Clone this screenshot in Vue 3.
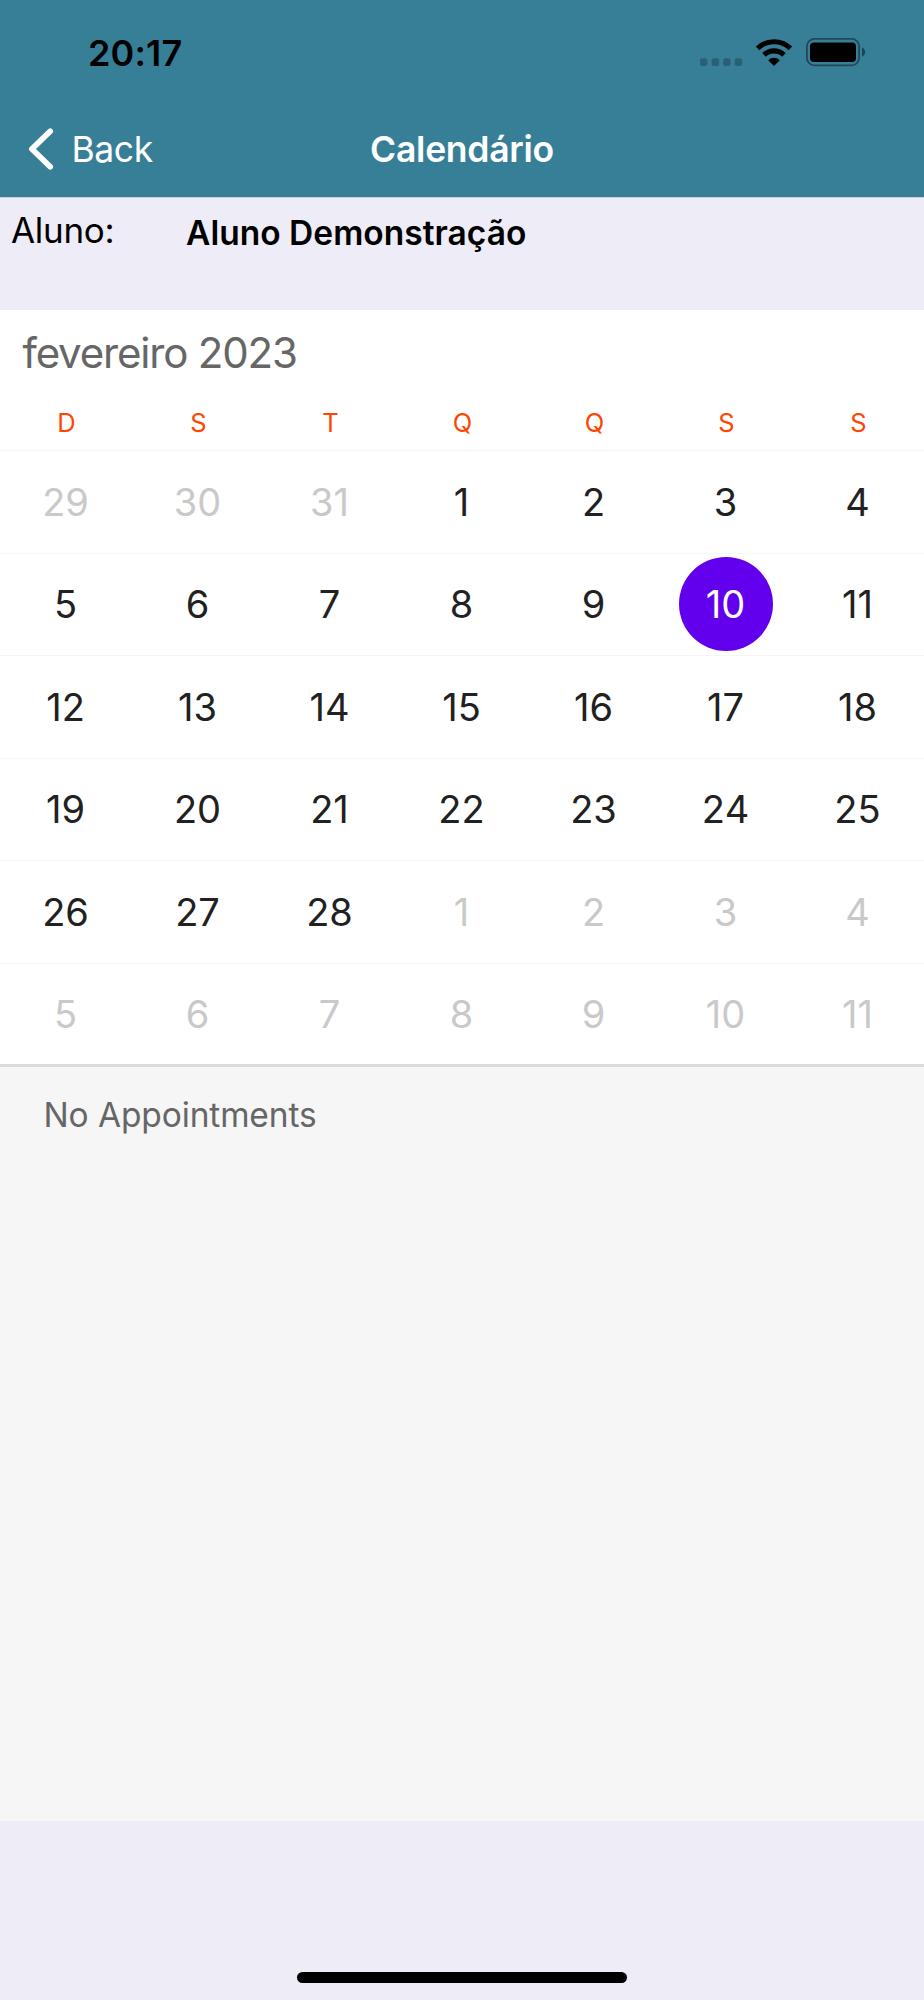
<script setup>
const weekdays = ['D', 'S', 'T', 'Q', 'Q', 'S', 'S']

// 42 days starting on 29 January 2023
const days = Array.from({ length: 42 }, (_, i) => {
  const date = new Date(2023, 0, 29 + i)
  const inMonth = date.getMonth() === 1
  return {
    key: i,
    label: date.getDate(),
    outside: !inMonth,
    selected: inMonth && date.getDate() === 10,
  }
})
const weeks = Array.from({ length: 6 }, (_, w) => days.slice(w * 7, w * 7 + 7))
</script>

<template>
  <div class="screen">
    <header class="header">
      <div class="status">
        <span class="time">20:17</span>
        <svg class="status-icons" width="168" height="32" viewBox="698 36 168 32">
          <g fill="#000" fill-opacity="0.24">
            <rect x="700" y="58.3" width="7.5" height="7.7" rx="2.2" />
            <rect x="711.6" y="58.3" width="7.5" height="7.7" rx="2.2" />
            <rect x="723.1" y="58.3" width="7.5" height="7.7" rx="2.2" />
            <rect x="734.6" y="58.3" width="7.5" height="7.7" rx="2.2" />
          </g>
          <g fill="none" stroke="#000" stroke-width="5.2">
            <path d="M757.6 48.4A23.6 23.6 0 0 1 790.4 48.4" />
            <path d="M764 54.8A14.6 14.6 0 0 1 784 54.8" />
          </g>
          <path d="M774 66L768.2 60.2A8.3 8.3 0 0 1 779.8 60.2Z" fill="#000" />
          <rect x="806.9" y="38.9" width="52.2" height="26.4" rx="7.4" fill="none" stroke="#000" stroke-opacity="0.42" stroke-width="1.8" />
          <rect x="810" y="42.4" width="46" height="19.6" rx="4" fill="#000" />
          <path d="M862 47.6C864 48.4 865.1 50.2 865.1 52.2C865.1 54.2 864 56 862 56.8Z" fill="#000" fill-opacity="0.45" />
        </svg>
      </div>
      <nav class="nav">
        <button class="back" type="button">
          <svg width="26" height="44" viewBox="28 127 26 44">
            <path d="M50.2 131.2L31.9 149L50.2 166.8" fill="none" stroke="#fff" stroke-width="5.7" stroke-linecap="round" stroke-linejoin="round" />
          </svg>
          <span>Back</span>
        </button>
        <h1 class="title">Calendário</h1>
      </nav>
    </header>

    <section class="student">
      <span class="student-label">Aluno:</span>
      <span class="student-name">Aluno Demonstração</span>
    </section>

    <main class="calendar">
      <h2 class="month">fevereiro 2023</h2>
      <div class="weekdays">
        <span v-for="(d, i) in weekdays" :key="i">{{ d }}</span>
      </div>
      <div v-for="(week, w) in weeks" :key="w" class="week">
        <span v-for="day in week" :key="day.key" class="day" :class="{ outside: day.outside, selected: day.selected }">{{ day.label }}</span>
      </div>
    </main>

    <section class="agenda">
      <p>No Appointments</p>
    </section>

    <footer class="footer">
      <div class="home-indicator"></div>
    </footer>
  </div>
</template>

<style>
body {
  margin: 0;
}
</style>

<style scoped>
.screen {
  width: 924px;
  height: 2000px;
  display: flex;
  flex-direction: column;
  background: #eeecf7;
  font-family: Inter, "Liberation Sans", sans-serif;
  color: #000;
  overflow: hidden;
  white-space: nowrap;
}
.header {
  height: 197px;
  background: #377f97;
  border-bottom: 1px solid #d2cedd;
}
.status {
  height: 105px;
  padding: 0 58px 0 88px;
  display: flex;
  align-items: center;
  justify-content: space-between;
}
.time {
  font-size: 36px;
  font-weight: 600;
  letter-spacing: 0.15px;
}
.status-icons {
  position: relative;
  top: -0.5px;
}
.nav {
  height: 88px;
  display: grid;
  grid-template-columns: 1fr auto 1fr;
  align-items: center;
  color: #fff;
}
.back {
  padding: 0 0 0 28px;
  border: 0;
  background: none;
  color: inherit;
  font: 400 35.5px Inter, "Liberation Sans", sans-serif;
  letter-spacing: -0.4px;
  display: flex;
  align-items: center;
  gap: 17.5px;
}
.title {
  margin: 0;
  font-size: 35.5px;
  font-weight: 600;
  letter-spacing: -0.26px;
}
.student {
  height: 111.5px;
  display: flex;
  align-items: flex-start;
}
.student-label {
  width: 175px;
  padding-left: 11px;
  font-size: 35px;
  line-height: 64px;
  letter-spacing: -0.3px;
}
.student-name {
  font-size: 33.5px;
  line-height: 70px;
  font-weight: 600;
  letter-spacing: 0.02px;
}
.calendar {
  background: #fff;
  border-bottom: 3px solid #dadcdb;
}
.month {
  height: 86.5px;
  margin: 0;
  padding-left: 22.5px;
  font-size: 42px;
  line-height: 86px;
  font-weight: 400;
  letter-spacing: -1.18px;
  color: #666;
}
.weekdays {
  height: 54px;
  display: grid;
  grid-template-columns: repeat(7, 1fr);
  font-size: 25.5px;
  line-height: 54px;
  text-align: center;
  color: #ff4500;
}
.weekdays span {
  padding-left: 1px;
}
.week {
  height: 102.5px;
  box-sizing: border-box;
  border-top: 1px solid #f6f6f8;
  display: grid;
  grid-template-columns: repeat(7, 1fr);
  justify-items: center;
  align-items: start;
  padding-top: 3.5px;
}
.week:last-child {
  height: 101.3px;
}
.day {
  width: 94px;
  height: 94px;
  box-sizing: border-box;
  padding-right: 1px;
  border-radius: 50%;
  font-size: 38px;
  line-height: 94px;
  font-kerning: none;
  text-align: center;
  color: #212121;
}
.outside {
  color: #c9c9c9;
}
.selected {
  background: #6200ee;
  color: #fff;
}
.agenda {
  flex: 1;
  background: #f6f6f6;
}
.agenda p {
  margin: 0;
  padding: 22px 0 0 43.5px;
  font-size: 33.5px;
  line-height: 52px;
  letter-spacing: -0.12px;
  color: #666;
}
.footer {
  height: 179px;
  display: flex;
  justify-content: center;
  align-items: flex-end;
}
.home-indicator {
  width: 330px;
  height: 11px;
  margin-bottom: 17px;
  border-radius: 6px;
  background: #000;
}
</style>
